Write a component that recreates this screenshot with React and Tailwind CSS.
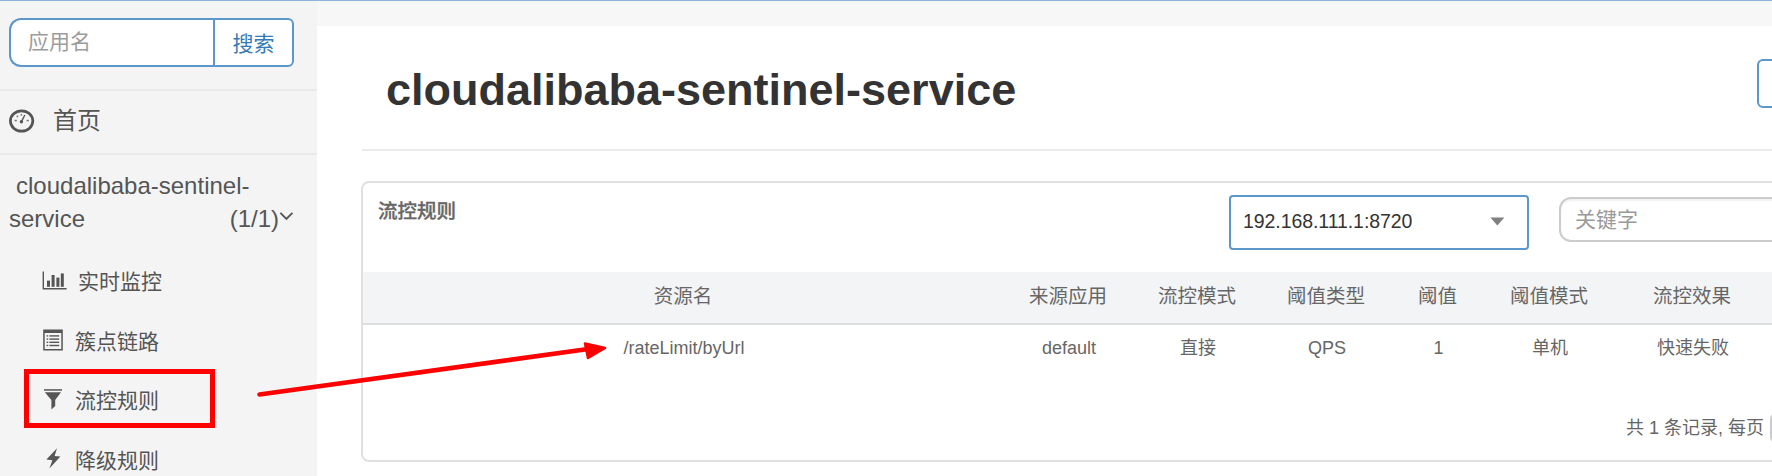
import React from "react";

const DashboardIcon = () => (
  <svg className="mb-0.5 h-6 w-[26px] shrink-0" viewBox="0 0 26 24" fill="none">
    <ellipse cx="12.6" cy="12" rx="11.2" ry="10.2" stroke="#555" strokeWidth="2.7" />
    <path d="M12.6 12.4 L15.8 6" stroke="#555" strokeWidth="1.4" />
    <circle cx="12.4" cy="12.8" r="1.7" fill="#555" />
    <g fill="#777">
      <rect x="5.6" y="10.8" width="2.2" height="1.5" />
      <rect x="17.6" y="10.8" width="2.2" height="1.5" />
      <rect x="7.6" y="6.6" width="1.6" height="1.6" />
      <rect x="11.6" y="5" width="1.5" height="1.6" />
    </g>
  </svg>
);

const StatsIcon = () => (
  <svg className="mb-0.5 h-[19px] w-[25px] shrink-0" viewBox="0 0 25 19" fill="#555">
    <path d="M0.6 0.5 H2 V17 H24.6 V18.4 H0.6 Z" />
    <rect x="5" y="9.6" width="3" height="6.2" />
    <rect x="9.6" y="4" width="3" height="11.8" />
    <rect x="14.4" y="6.6" width="3" height="9.2" />
    <rect x="18.8" y="2.4" width="3" height="13.4" />
  </svg>
);

const ListIcon = () => (
  <svg className="mb-[3px] h-[22px] w-5 shrink-0" viewBox="0 0 20 22" fill="#555">
    <path d="M0.2 0.4 H19.8 V21.4 H0.2 Z M1.7 4 V20 H18.3 V4 Z" fillRule="evenodd" />
    <rect x="3.6" y="6.2" width="1.6" height="1.4" />
    <rect x="6.4" y="6.2" width="9.8" height="1.4" />
    <rect x="3.6" y="9.4" width="1.6" height="1.4" />
    <rect x="6.4" y="9.4" width="9.8" height="1.4" />
    <rect x="3.6" y="12.6" width="1.6" height="1.4" />
    <rect x="6.4" y="12.6" width="9.8" height="1.4" />
    <rect x="3.6" y="15.8" width="1.6" height="1.4" />
    <rect x="6.4" y="15.8" width="9.8" height="1.4" />
  </svg>
);

const FilterIcon = () => (
  <svg className="mb-[3px] h-[21px] w-[18px] shrink-0" viewBox="0 0 18 21" fill="#555">
    <rect x="0" y="0.2" width="18" height="1.5" />
    <path d="M0.8 3.2 H17 L11.2 11 V17 L7.4 20.6 V11 Z" />
  </svg>
);

const FlashIcon = () => (
  <svg className="mb-[3px] h-[21px] w-[15px] shrink-0" viewBox="0 0 15 21" fill="#555">
    <path d="M11 0.2 L0.4 11.6 L6.4 12.2 L3.4 20.6 L14.4 8.6 L8.6 8 Z" />
  </svg>
);

const menu = [
  { label: "实时监控", icon: <StatsIcon />, pad: "pl-[42px]", gap: "gap-[11px]" },
  { label: "簇点链路", icon: <ListIcon />, pad: "pl-[43px]", gap: "gap-[12px]" },
  { label: "流控规则", icon: <FilterIcon />, pad: "pl-[44px]", gap: "gap-[13px]" },
  { label: "降级规则", icon: <FlashIcon />, pad: "pl-[46px]", gap: "gap-[14px]" },
];

const headers = ["资源名", "来源应用", "流控模式", "阈值类型", "阈值", "阈值模式", "流控效果"];
const row = ["/rateLimit/byUrl", "default", "直接", "QPS", "1", "单机", "快速失败"];
const columns = "grid grid-cols-[640px_130px_128px_130px_93px_130px_156px]";

function Sidebar() {
  return (
    <aside className="flex h-full w-[317px] shrink-0 flex-col bg-[#f4f4f4] text-[#555]">
      <div className="box-content flex h-[88px] shrink-0 border-b-2 border-[#e9e9e9]">
        <div className="mt-[17px] ml-[9px] flex h-[49px] w-[286px]">
          <div className="flex w-[204px] items-center rounded-l-[12px] border-2 border-r-0 border-[#5b97cb] bg-white pl-[17px] pb-px text-[21px] text-[#9c9c9c]">
            应用名
          </div>
          <div className="flex w-[81px] items-center justify-center rounded-r-[6px] border-2 border-[#5b97cb] bg-white pt-0.5 text-[21px] text-[#337ab7]">
            搜索
          </div>
        </div>
      </div>
      <div className="box-content flex h-[62px] shrink-0 items-center gap-[18px] border-b-2 border-[#e9e9e9] pl-[9px] text-[24px]">
        <DashboardIcon />
        <span className="pb-0.5">首页</span>
      </div>
      <div className="flex h-[96px] shrink-0 flex-col pt-[14px] pl-[9px] text-[24px] leading-[33px]">
        <div className="pl-[7px]">cloudalibaba-sentinel-</div>
        <div className="flex w-[285px] items-start justify-between">
          <span>service</span>
          <span className="flex items-start">
            (1/1)
            <svg className="mt-[9px] h-[10px] w-[15px]" viewBox="0 0 15 10" fill="none">
              <path d="M1.4 1.8 L7.4 7.8 L13.4 1.8" stroke="#555" strokeWidth="1.9" />
            </svg>
          </span>
        </div>
      </div>
      <nav className="flex shrink-0 flex-col pt-px text-[21px]">
        {menu.map((item) => (
          <div key={item.label} className={`flex h-[59.5px] items-center ${item.pad} ${item.gap}`}>
            {item.icon}
            <span>{item.label}</span>
          </div>
        ))}
      </nav>
    </aside>
  );
}

function RulesPanel() {
  return (
    <section className="ml-[44px] mt-[30px] h-[281px] w-[1500px] shrink-0 rounded-[8px] border-2 border-[#e0e0e0] bg-white text-[#666]">
      <div className="flex h-[89px] items-start">
        <h2 className="w-[866px] pt-[13px] pl-[15px] text-[19.5px] leading-[30px] font-medium text-[#666] [-webkit-text-stroke:0.3px_#666]">流控规则</h2>
        <div className="mt-[12px] flex h-[55px] w-[300px] items-center justify-between rounded-[4px] border-2 border-[#5b97cb] pr-[22px] pb-0.5 pl-[12px] text-[19.5px] text-[#333]">
          <span className="tracking-[-0.07px]">192.168.111.1:8720</span>
          <svg className="h-[9px] w-[15px]" viewBox="0 0 15 9" fill="#808080">
            <path d="M0.4 0.6 H14.4 L7.4 8.4 Z" />
          </svg>
        </div>
        <div className="mt-[14px] ml-[30px] flex h-[45px] w-[260px] items-center rounded-[12px] border-2 border-[#ccc] pl-[14px] text-[21px] text-[#999] shadow-[inset_0_2px_2px_rgba(0,0,0,0.06)]">
          关键字
        </div>
      </div>
      <div className={`${columns} h-[53px] items-center border-b-2 border-[#dedede] bg-[#f3f4f6] pb-px text-center text-[19.5px]`}>
        {headers.map((h) => (
          <span key={h}>{h}</span>
        ))}
      </div>
      <div className={`${columns} h-[47px] items-center pl-px text-center text-[18px]`}>
        {row.map((c) => (
          <span key={c}>{c}</span>
        ))}
      </div>
      <div className="ml-[1263px] mt-[41px] flex h-[30px] items-center text-[18px] whitespace-nowrap">
        <span className="w-[144px]">共 1 条记录, 每页</span>
        <span className="h-[30px] w-[60px] rounded-[6px] border-2 border-[#ccc]" />
      </div>
    </section>
  );
}

export default function App() {
  return (
    <div className="relative flex h-[476px] w-[1772px] flex-col overflow-hidden bg-white font-['Liberation_Sans','Noto_Sans_CJK_SC',sans-serif]">
      <div className="h-px shrink-0 bg-[#8fb4d9]" />
      <div className="flex min-h-0 flex-1">
        <Sidebar />
        <main className="flex min-w-0 flex-1 flex-col overflow-hidden">
          <div className="h-[25px] shrink-0 bg-[#f7f7f7]" />
          <div className="ml-[45px] flex h-[125px] w-[1500px] shrink-0 border-b-2 border-[#ebebeb]">
            <h1 className="w-[1395px] pt-[32px] pl-[24px] text-[45px] leading-[64px] font-bold text-[#333]">
              cloudalibaba-sentinel-service
            </h1>
            <div className="mt-[33px] h-[49px] w-[100px] rounded-[6px] border-2 border-[#5b97cb]" />
          </div>
          <RulesPanel />
        </main>
      </div>
      <div className="absolute top-[369px] left-[24px] h-[59px] w-[191px] border-5 border-[#ff0000]" />
      <svg className="absolute top-[330px] left-[250px] h-[80px] w-[370px]" viewBox="250 330 370 80">
        <path d="M259.5 394.5 L590 348.8" stroke="#ff0000" strokeWidth="4.5" strokeLinecap="round" />
        <path d="M585 343.5 L605 348 L588 358 Z" fill="#ff0000" stroke="#ff0000" strokeWidth="2.5" strokeLinejoin="round" />
      </svg>
    </div>
  );
}
